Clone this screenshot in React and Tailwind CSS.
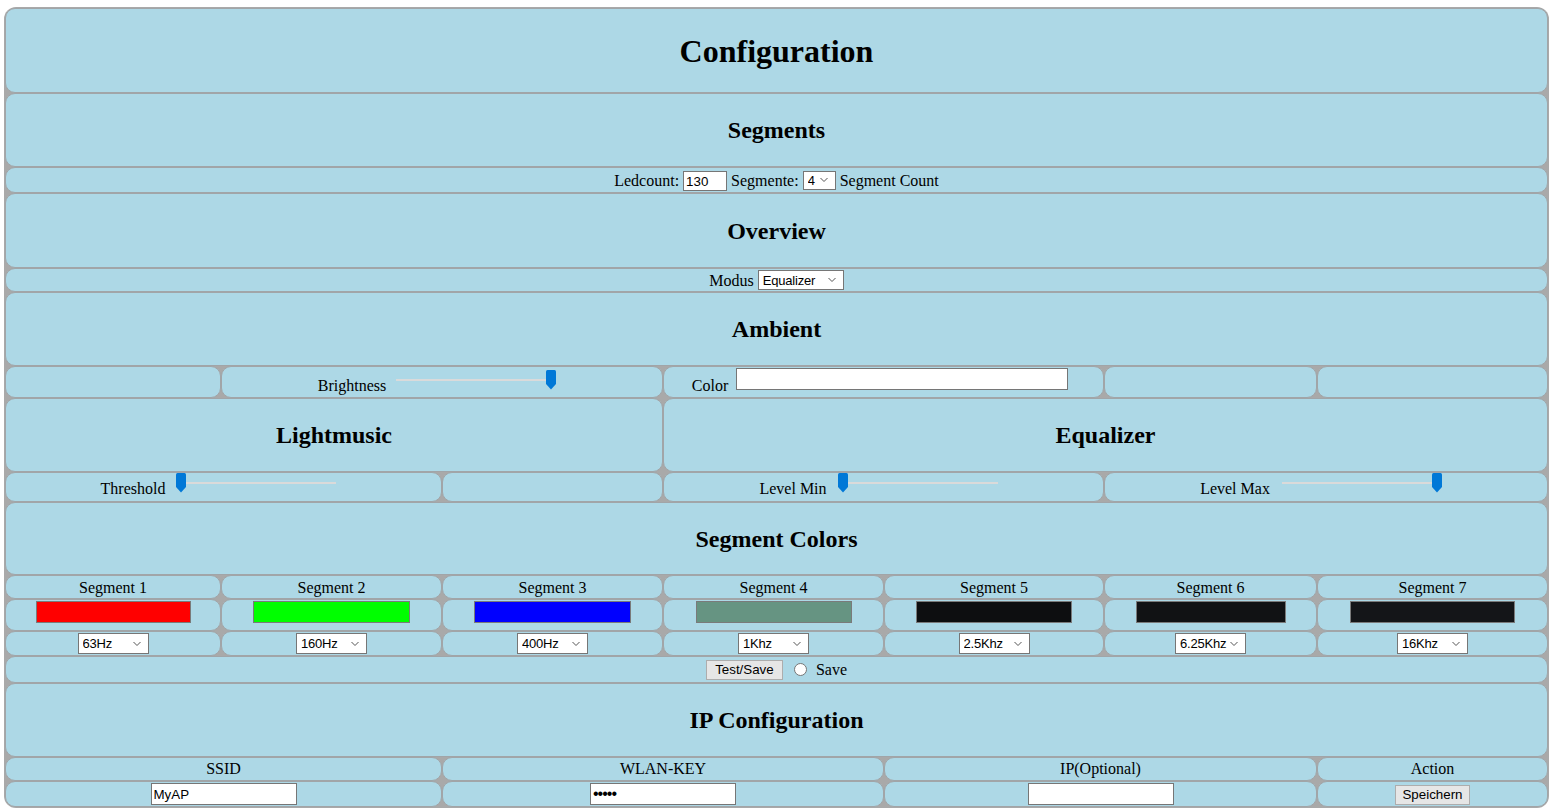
import React from 'react';
import { clsx } from 'clsx';

const SPAN = {
  1: 'col-span-1',
  2: 'col-span-2',
  3: 'col-span-3',
  4: 'col-span-4',
  7: 'col-span-7',
};

const sansFont = "font-['Liberation_Sans',Arial,sans-serif]";
const sans = sansFont + ' text-[13.33px]';

function Cell({ span = 1, className, children }) {
  return (
    <div
      className={clsx(
        'rounded-[10px] border border-[#a1a5a8] bg-[#add8e6] flex items-center justify-center min-w-0',
        SPAN[span],
        className
      )}
    >
      {children}
    </div>
  );
}

function Chevron() {
  return (
    <svg width="8" height="5" viewBox="0 0 8 5" className="absolute right-[8px] top-1/2 -translate-y-1/2 pointer-events-none">
      <path d="M0.5 0.5 L4 4 L7.5 0.5" fill="none" stroke="#555" strokeWidth="1" />
    </svg>
  );
}

function Select({ className, options, value }) {
  return (
    <div className={clsx('relative inline-flex', className)}>
      <select
        defaultValue={value}
        className={clsx(
          'appearance-none w-full h-full bg-white border border-[#767676] pl-[4px] pr-[12px] leading-none text-black outline-none text-[13px] tracking-[-0.2px]',
          sansFont
        )}
      >
        {options.map((o) => (
          <option key={o}>{o}</option>
        ))}
      </select>
      <Chevron />
    </div>
  );
}

function Slider({ right, className }) {
  return (
    <div className={clsx('relative w-[160px] h-[25px] mr-[10px] shrink-0', className)}>
      <div
        className={clsx(
          'absolute top-[9px] h-[2px] bg-[#dadada]',
          right ? 'left-0 right-[8px]' : 'left-[8px] right-0'
        )}
      />
      <svg
        width="10"
        height="20"
        viewBox="0 0 10 20"
        className={clsx('absolute top-0', right ? 'right-0' : 'left-0')}
      >
        <path d="M0 1.5 Q0 0 1.5 0 H8.5 Q10 0 10 1.5 V14 L5 19.5 L0 14 Z" fill="#0078d7" />
      </svg>
    </div>
  );
}

function TextInput({ className, value = '', type = 'text' }) {
  return (
    <input
      type={type}
      defaultValue={value}
      className={clsx(
        'bg-white border border-[#767676] px-[2px] text-black outline-none',
        sansFont,
        type === 'password' ? 'text-[16px] tracking-[-1px]' : 'text-[13.33px]',
        className
      )}
    />
  );
}

function Button({ children, className }) {
  return (
    <button
      className={clsx(
        'bg-[#e6e6e6] border border-[#adadad] text-black leading-none',
        sans,
        className
      )}
    >
      {children}
    </button>
  );
}

const freqs = ['63Hz', '160Hz', '400Hz', '1Khz', '2.5Khz', '6.25Khz', '16Khz'];
const segColors = [
  { c: 'bg-[#ff0000]', w: 'w-[155px]' },
  { c: 'bg-[#00ff00]', w: 'w-[157px]' },
  { c: 'bg-[#0000ff]', w: 'w-[157px]' },
  { c: 'bg-[#669482]', w: 'w-[156px]' },
  { c: 'bg-[#0d0e10]', w: 'w-[156px]' },
  { c: 'bg-[#111214]', w: 'w-[150px]' },
  { c: 'bg-[#141518]', w: 'w-[165px]' },
];

export default function App() {
  return (
    <div className="min-h-screen bg-white pt-[7px] pl-[4px] font-['Liberation_Serif','Times_New_Roman',serif] text-[16px] text-black">
      <div className="w-[1545px] rounded-[12px] bg-[#a9a9a9] p-px grid grid-cols-[216px_221px_221px_221px_220px_213px_231px] grid-rows-[85px_74px_26px_75px_24px_74px_32px_74px_30px_73px_24px_32px_25px_27px_74px_24px_26px]">
        {/* Title */}
        <Cell span={7}>
          <h1 className="text-[32px] font-bold">Configuration</h1>
        </Cell>

        {/* Segments */}
        <Cell span={7}>
          <h2 className="text-[24px] font-bold">Segments</h2>
        </Cell>
        <Cell span={7} className="gap-[4px]">
          <span className="translate-y-[1px]">Ledcount:</span>
          <TextInput value="130" className="w-[44px] h-[20px] translate-y-[1px]" />
          <span className="translate-y-[1px]">Segmente:</span>
          <Select className="w-[33px] h-[19px]" options={['1', '2', '3', '4', '5', '6', '7']} value="4" />
          <span className="translate-y-[1px]">Segment Count</span>
        </Cell>

        {/* Overview */}
        <Cell span={7}>
          <h2 className="text-[24px] font-bold">Overview</h2>
        </Cell>
        <Cell span={7} className="gap-[4px]">
          <span className="translate-y-[1px]">Modus</span>
          <Select className="w-[86px] h-[20px]" options={['Ambient', 'Lightmusic', 'Equalizer']} value="Equalizer" />
        </Cell>

        {/* Ambient */}
        <Cell span={7}>
          <h2 className="text-[24px] font-bold">Ambient</h2>
        </Cell>
        <Cell />
        <Cell span={2} className="items-end pb-[2px]">
          <span className="leading-[18px] mr-[10px]">Brightness</span>
          <Slider right />
        </Cell>
        <Cell span={2} className="items-end pb-[2px]">
          <span className="leading-[18px] mr-[8px]">Color</span>
          <div className="w-[332px] h-[22px] bg-white border border-[#767676] mb-[5px] mr-[7px]" />
        </Cell>
        <Cell />
        <Cell />

        {/* Lightmusic / Equalizer */}
        <Cell span={3}>
          <h2 className="text-[24px] font-bold">Lightmusic</h2>
        </Cell>
        <Cell span={4}>
          <h2 className="text-[24px] font-bold">Equalizer</h2>
        </Cell>
        <Cell span={2} className="items-end pb-[3px]">
          <span className="leading-[18px] mr-[11px]">Threshold</span>
          <Slider />
        </Cell>
        <Cell />
        <Cell span={2} className="items-end pb-[3px]">
          <span className="leading-[18px] mr-[11px]">Level Min</span>
          <Slider />
        </Cell>
        <Cell span={2} className="items-end pb-[3px]">
          <span className="leading-[18px] mr-[12px]">Level Max</span>
          <Slider right />
        </Cell>

        {/* Segment Colors */}
        <Cell span={7}>
          <h2 className="text-[24px] font-bold">Segment Colors</h2>
        </Cell>
        {segColors.map((_, i) => (
          <Cell key={'l' + i}>
            <span className="translate-y-[1px]">Segment {i + 1}</span>
          </Cell>
        ))}
        {segColors.map((s, i) => (
          <Cell key={'c' + i} className="items-start pt-px">
            <div className={clsx('h-[22px] border border-[#7a7a7a]', s.c, s.w)} />
          </Cell>
        ))}
        {freqs.map((f) => (
          <Cell key={f}>
            <Select className="w-[71px] h-[21px]" options={freqs} value={f} />
          </Cell>
        ))}
        <Cell span={7}>
          <Button className="w-[77px] h-[20px] mr-[11px]">Test/Save</Button>
          <span className="w-[13px] h-[13px] rounded-full border border-[#767676] bg-white mr-[9px]" />
          <span>Save</span>
        </Cell>

        {/* IP Configuration */}
        <Cell span={7}>
          <h2 className="text-[24px] font-bold">IP Configuration</h2>
        </Cell>
        <Cell span={2}>
          <span>SSID</span>
        </Cell>
        <Cell span={2}>
          <span>WLAN-KEY</span>
        </Cell>
        <Cell span={2}>
          <span>IP(Optional)</span>
        </Cell>
        <Cell>
          <span>Action</span>
        </Cell>
        <Cell span={2} className="items-start pt-px">
          <TextInput value="MyAP" className="w-[146px] h-[22px]" />
        </Cell>
        <Cell span={2} className="items-start pt-px">
          <TextInput type="password" value="12345" className="w-[146px] h-[22px]" />
        </Cell>
        <Cell span={2} className="items-start pt-px">
          <TextInput className="w-[146px] h-[22px]" />
        </Cell>
        <Cell className="items-start pt-[3px]">
          <Button className="w-[75px] h-[20px]">Speichern</Button>
        </Cell>
      </div>
    </div>
  );
}
